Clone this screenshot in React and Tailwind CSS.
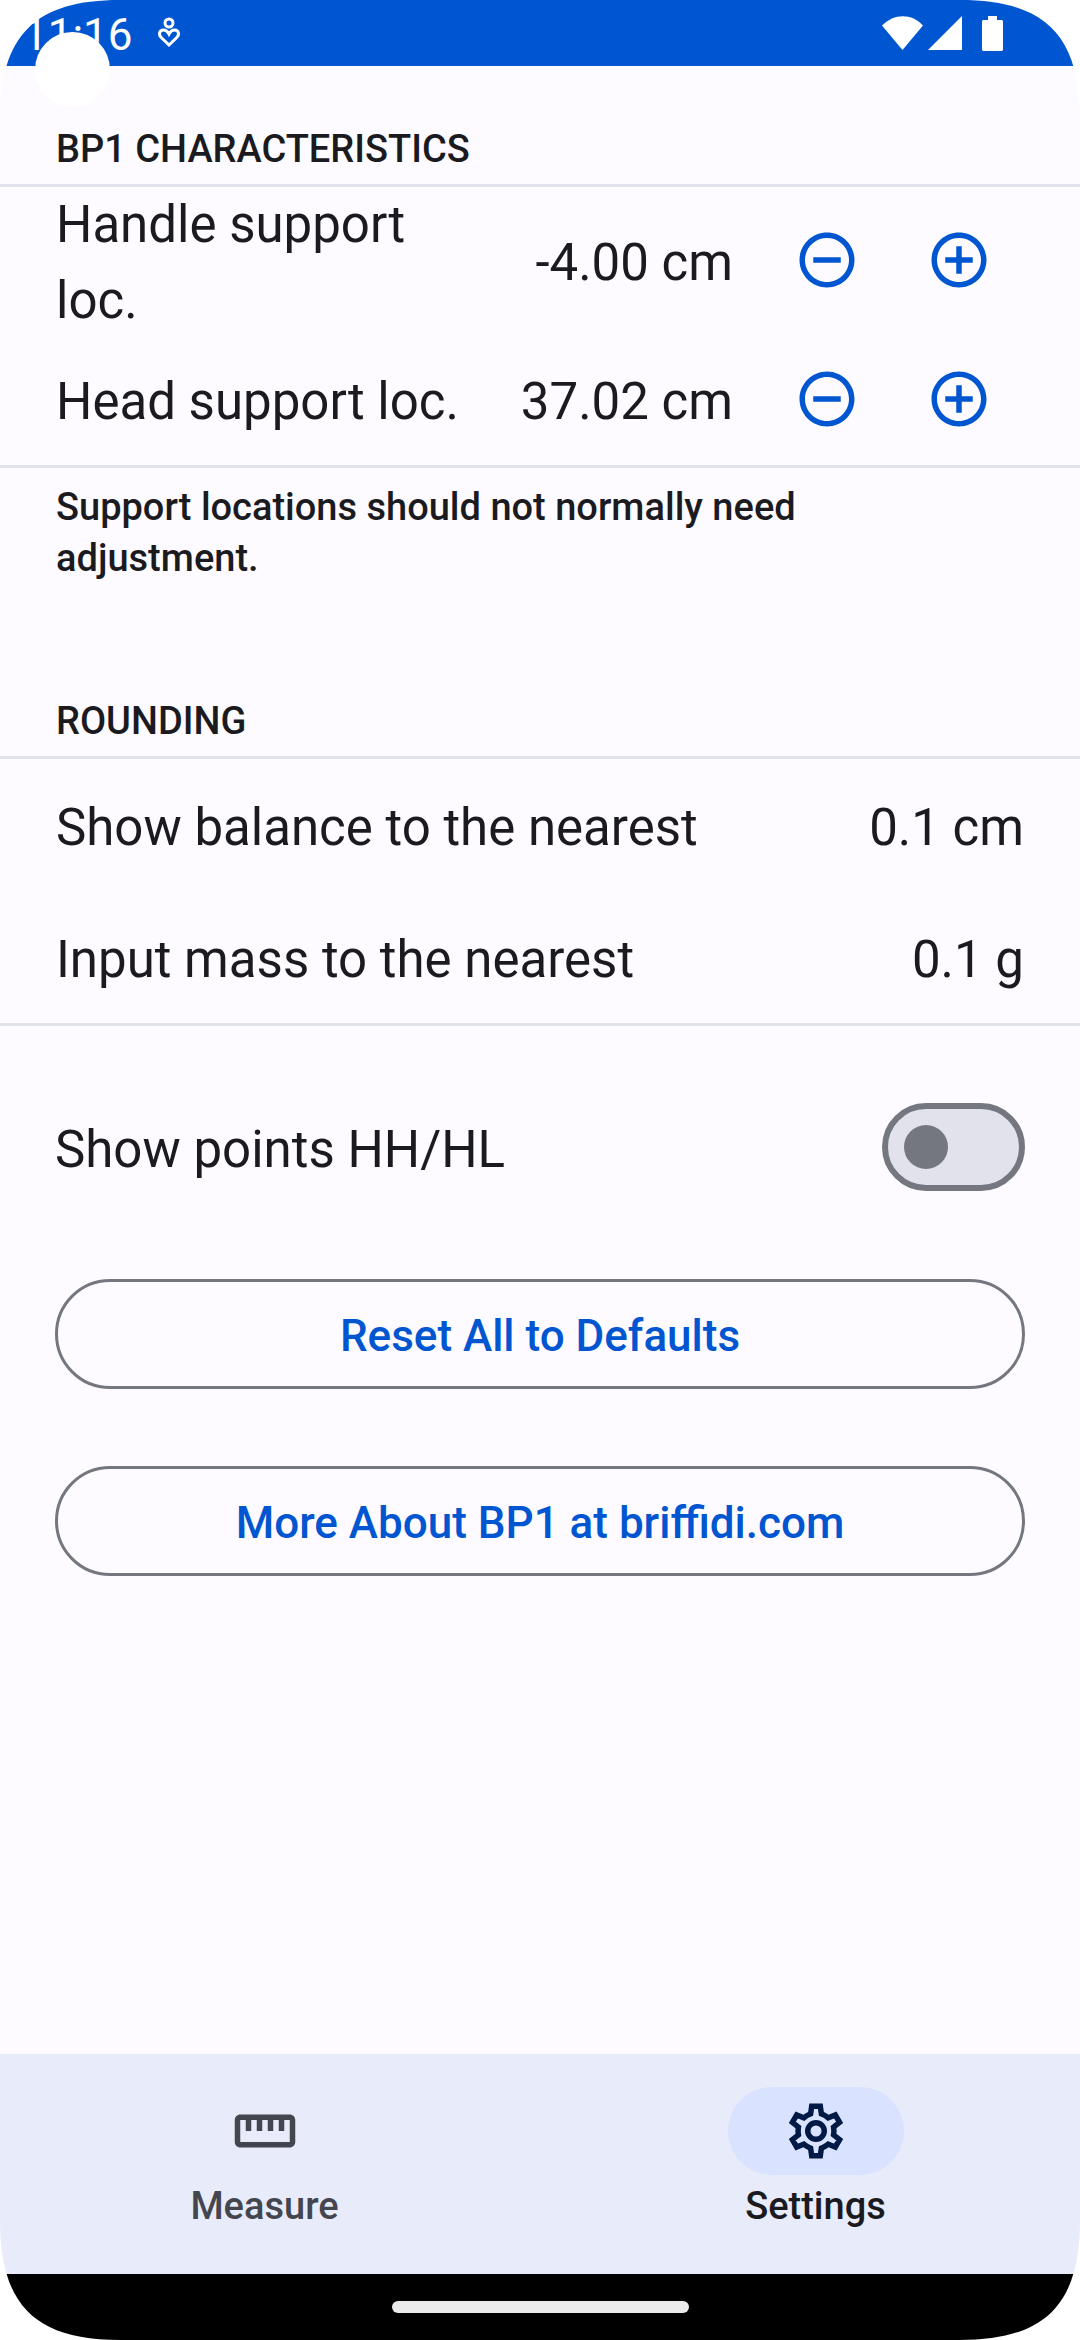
import { useState } from "react";
import {
  MdAddCircleOutline,
  MdOutlineStraighten,
  MdRemoveCircleOutline,
} from "react-icons/md";

const gearPath =
  "M19.45 11.03L21.88 9.12L19.45 4.9L16.58 6.06Q15.800 5.450 14.870 5.070L14.430 2H9.570L9.130 5.070Q8.200 5.450 7.420 6.060L4.550 4.900L2.120 9.120L4.550 11.030Q4.430 12 4.550 12.970L2.120 14.880L4.550 19.100L7.420 17.940Q8.200 18.550 9.130 18.930L9.570 22H14.430L14.870 18.930Q15.800 18.550 16.580 17.940L19.450 19.100L21.880 14.880L19.450 12.970Q19.570 12 19.450 11.030Z";

function GearIcon({ className }) {
  return (
    <svg aria-hidden="true" viewBox="0 0 24 24" className={className} fill="none" stroke="currentColor">
      <clipPath id="gear-outline">
        <path d={gearPath} />
      </clipPath>
      <path d={gearPath} strokeWidth="4" clipPath="url(#gear-outline)" />
      <circle cx="12" cy="12" r="3" strokeWidth="2" />
    </svg>
  );
}

function ScreenCorner({ className }) {
  return (
    <svg
      aria-hidden="true"
      viewBox="0 0 120 120"
      className={`pointer-events-none absolute size-[120px] fill-white ${className}`}
    >
      <path d="M0 0H120C35 0 0 35 0 120Z" />
    </svg>
  );
}

function StatusBar() {
  return (
    <header className="relative flex h-[66px] items-center bg-[#0056d0] pr-[77px] pl-[23px] text-white">
      <span className="pt-1 text-[44px] leading-[48px]">11:16</span>
      <svg aria-hidden="true" viewBox="0 0 24 32" className="ml-6 h-8 w-6" fill="none" stroke="currentColor" strokeWidth="3">
        <circle cx="12" cy="6" r="4" />
        <path d="M12 28L4.200 20.500C1.200 17.500 2.400 13 6.400 13C9 13 10.800 14.600 12 17C13.200 14.600 15 13 17.600 13C21.600 13 22.800 17.500 19.800 20.500Z" />
      </svg>
      <div className="ml-auto flex items-center">
        <svg aria-hidden="true" viewBox="0 0 42 34" className="h-[34px] w-[42px] fill-current">
          <path d="M0 9.500C12 -3 30 -3 41 9.500L20.500 34Z" />
        </svg>
        <svg aria-hidden="true" viewBox="0 0 34 34" className="ml-1 size-[34px] fill-current">
          <path d="M34 0V34H0Z" />
        </svg>
        <svg aria-hidden="true" viewBox="0 0 21 35" className="ml-5 h-[35px] w-[21px] fill-current">
          <path d="M6 0H15V4H20L21 5V34L20 35H1L0 34V5L1 4H6Z" />
        </svg>
      </div>
      <div className="absolute top-8 left-[35px] size-[75px] rounded-full bg-white" />
    </header>
  );
}

function SectionTitle({ children }) {
  return (
    <h2 className="border-b-3 border-[#e1e2ec] px-14 pb-[9px] text-[38px] leading-[51px] font-medium">
      {children}
    </h2>
  );
}

function SupportRow({ label, value, onChange, className }) {
  return (
    <div className={`flex items-center pr-[55px] pl-14 ${className}`}>
      <span className="flex-1 pr-8">{label}</span>
      <output className="mr-7 min-w-[220px] text-right">{value.toFixed(2)} cm</output>
      <div className="flex pb-1.5 text-[#0056d0]">
        <button
          type="button"
          aria-label={`Decrease ${label}`}
          onClick={() => onChange(value - 0.01)}
          className="flex w-[132px] justify-center"
        >
          <MdRemoveCircleOutline className="size-[66px]" />
        </button>
        <button
          type="button"
          aria-label={`Increase ${label}`}
          onClick={() => onChange(value + 0.01)}
          className="flex w-[132px] justify-center"
        >
          <MdAddCircleOutline className="size-[66px]" />
        </button>
      </div>
    </div>
  );
}

function RoundingRow({ label, value }) {
  return (
    <div className="flex h-[132px] items-center justify-between px-14 pt-1.5">
      <dt>{label}</dt>
      <dd>{value}</dd>
    </div>
  );
}

const outlined =
  "flex h-[110px] w-full items-center justify-center rounded-full border-3 border-[#74777f] pt-1 text-[44px] leading-[63px] font-medium text-[#0056d0]";

function NavItem({ icon: Icon, label, active }) {
  return (
    <button
      type="button"
      aria-current={active ? "page" : undefined}
      className={`flex flex-1 flex-col items-center gap-1.5 ${active ? "text-[#1b1b1f]" : "text-[#44464f]"}`}
    >
      <span
        className={`flex h-[88px] w-44 items-center justify-center rounded-full ${active ? "bg-[#d9e2ff] text-[#001945]" : ""}`}
      >
        <Icon className="size-[66px]" />
      </span>
      <span className="text-[38px] leading-[51px] font-medium">{label}</span>
    </button>
  );
}

export default function App() {
  const [handle, setHandle] = useState(-4);
  const [head, setHead] = useState(37.02);
  const [points, setPoints] = useState(false);

  return (
    <div className="relative flex min-h-screen flex-col overflow-hidden bg-[#fdfbff] font-['Roboto',sans-serif] text-[#1b1b1f]">
      <StatusBar />

      <main className="flex-1 pt-[58px] text-[51px] leading-[76px]">
        <section>
          <SectionTitle>BP1 CHARACTERISTICS</SectionTitle>
          <SupportRow label="Handle support loc." value={handle} onChange={setHandle} className="min-h-[152px]" />
          <SupportRow label="Head support loc." value={head} onChange={setHead} className="min-h-[126px]" />
          <p className="border-t-3 border-[#e1e2ec] pt-[14px] pr-40 pl-14 text-[38px] leading-[51px] font-medium">
            Support locations should not normally need adjustment.
          </p>
        </section>

        <section className="pt-28">
          <SectionTitle>ROUNDING</SectionTitle>
          <dl className="border-b-3 border-[#e1e2ec]">
            <RoundingRow label="Show balance to the nearest" value="0.1 cm" />
            <RoundingRow label="Input mass to the nearest" value="0.1 g" />
          </dl>
        </section>

        <section className="flex flex-col gap-[77px] px-[55px] pt-[55px]">
          <label className="-mb-[11px] flex h-[132px] items-center justify-between">
            <span className="pt-1.5">Show points HH/HL</span>
            <input
              type="checkbox"
              role="switch"
              checked={points}
              onChange={(e) => setPoints(e.target.checked)}
              className="flex h-[88px] w-[143px] appearance-none items-center rounded-full border-6 border-[#74777f] bg-[#e1e2ec] px-4 before:size-11 before:rounded-full before:bg-[#74777f] checked:justify-end"
            />
          </label>
          <button
            type="button"
            className={outlined}
            onClick={() => {
              setHandle(-4);
              setHead(37.02);
              setPoints(false);
            }}
          >
            Reset All to Defaults
          </button>
          <a href="https://briffidi.com" className={outlined}>
            More About BP1 at briffidi.com
          </a>
        </section>
      </main>

      <nav className="flex h-[220px] gap-[22px] bg-[#e8ebfa] pt-[33px]">
        <NavItem icon={MdOutlineStraighten} label="Measure" />
        <NavItem icon={GearIcon} label="Settings" active />
      </nav>

      <footer className="flex h-[66px] items-center justify-center bg-black">
        <div className="h-3 w-[297px] rounded-full bg-[#ebebeb]" />
      </footer>

      <ScreenCorner className="top-0 left-0" />
      <ScreenCorner className="top-0 right-0 rotate-90" />
      <ScreenCorner className="right-0 bottom-0 rotate-180" />
      <ScreenCorner className="bottom-0 left-0 -rotate-90" />
    </div>
  );
}
